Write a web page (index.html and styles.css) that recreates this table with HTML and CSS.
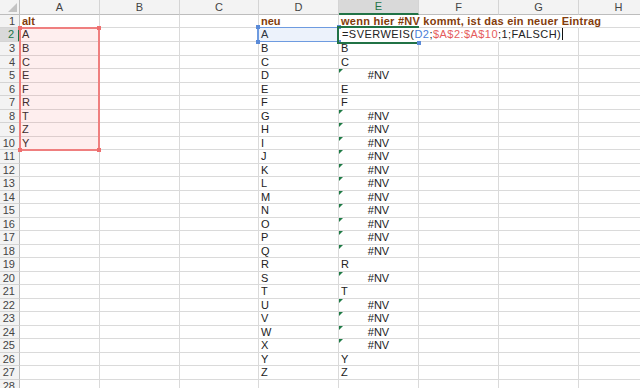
FILE: index.html
```html
<!DOCTYPE html>
<html lang="de">
<head>
<meta charset="utf-8">
<title>Tabelle</title>
<link rel="stylesheet" href="styles.css">
</head>
<body>
<div class="sheet">
  <div class="row colhead">
    <div class="corner"><span class="tri"></span></div>
    <div class="ch">A</div><div class="ch">B</div><div class="ch w79">C</div><div class="ch">D</div><div class="ch chsel">E</div><div class="ch">F</div><div class="ch">G</div><div class="ch">H</div>
  </div>
  <div class="row r13"><div class="rh">1</div><div class="cell hd">alt</div><div class="cell"></div><div class="cell w79"></div><div class="cell hd">neu</div><div class="cell hd wide nr">wenn hier #NV kommt, ist das ein neuer Eintrag</div><div class="cell nr"></div><div class="cell nr"></div><div class="cell"></div></div>
  <div class="row r14"><div class="rh rhsel">2</div><div class="cell">A</div><div class="cell"></div><div class="cell w79"></div><div class="cell">A</div><div class="cell nr nb formula">=SVERWEIS(<span class="refb">D2</span>;<span class="refr">$A$2:$A$10</span>;1;FALSCH)<span class="caret"></span></div><div class="cell nr"></div><div class="cell"></div><div class="cell"></div></div>
  <div class="row r14"><div class="rh">3</div><div class="cell">B</div><div class="cell"></div><div class="cell w79"></div><div class="cell">B</div><div class="cell">B</div><div class="cell"></div><div class="cell"></div><div class="cell"></div></div>
  <div class="row r13"><div class="rh">4</div><div class="cell">C</div><div class="cell"></div><div class="cell w79"></div><div class="cell">C</div><div class="cell">C</div><div class="cell"></div><div class="cell"></div><div class="cell"></div></div>
  <div class="row r14"><div class="rh">5</div><div class="cell">E</div><div class="cell"></div><div class="cell w79"></div><div class="cell">D</div><div class="cell err">#NV</div><div class="cell"></div><div class="cell"></div><div class="cell"></div></div>
  <div class="row r13"><div class="rh">6</div><div class="cell">F</div><div class="cell"></div><div class="cell w79"></div><div class="cell">E</div><div class="cell">E</div><div class="cell"></div><div class="cell"></div><div class="cell"></div></div>
  <div class="row r14"><div class="rh">7</div><div class="cell">R</div><div class="cell"></div><div class="cell w79"></div><div class="cell">F</div><div class="cell">F</div><div class="cell"></div><div class="cell"></div><div class="cell"></div></div>
  <div class="row r13"><div class="rh">8</div><div class="cell">T</div><div class="cell"></div><div class="cell w79"></div><div class="cell">G</div><div class="cell err">#NV</div><div class="cell"></div><div class="cell"></div><div class="cell"></div></div>
  <div class="row r14"><div class="rh">9</div><div class="cell">Z</div><div class="cell"></div><div class="cell w79"></div><div class="cell">H</div><div class="cell err">#NV</div><div class="cell"></div><div class="cell"></div><div class="cell"></div></div>
  <div class="row r13"><div class="rh">10</div><div class="cell">Y</div><div class="cell"></div><div class="cell w79"></div><div class="cell">I</div><div class="cell err">#NV</div><div class="cell"></div><div class="cell"></div><div class="cell"></div></div>
  <div class="row r14"><div class="rh">11</div><div class="cell"></div><div class="cell"></div><div class="cell w79"></div><div class="cell">J</div><div class="cell err">#NV</div><div class="cell"></div><div class="cell"></div><div class="cell"></div></div>
  <div class="row r13"><div class="rh">12</div><div class="cell"></div><div class="cell"></div><div class="cell w79"></div><div class="cell">K</div><div class="cell err">#NV</div><div class="cell"></div><div class="cell"></div><div class="cell"></div></div>
  <div class="row r14"><div class="rh">13</div><div class="cell"></div><div class="cell"></div><div class="cell w79"></div><div class="cell">L</div><div class="cell err">#NV</div><div class="cell"></div><div class="cell"></div><div class="cell"></div></div>
  <div class="row r13"><div class="rh">14</div><div class="cell"></div><div class="cell"></div><div class="cell w79"></div><div class="cell">M</div><div class="cell err">#NV</div><div class="cell"></div><div class="cell"></div><div class="cell"></div></div>
  <div class="row r14"><div class="rh">15</div><div class="cell"></div><div class="cell"></div><div class="cell w79"></div><div class="cell">N</div><div class="cell err">#NV</div><div class="cell"></div><div class="cell"></div><div class="cell"></div></div>
  <div class="row r13"><div class="rh">16</div><div class="cell"></div><div class="cell"></div><div class="cell w79"></div><div class="cell">O</div><div class="cell err">#NV</div><div class="cell"></div><div class="cell"></div><div class="cell"></div></div>
  <div class="row r14"><div class="rh">17</div><div class="cell"></div><div class="cell"></div><div class="cell w79"></div><div class="cell">P</div><div class="cell err">#NV</div><div class="cell"></div><div class="cell"></div><div class="cell"></div></div>
  <div class="row r13"><div class="rh">18</div><div class="cell"></div><div class="cell"></div><div class="cell w79"></div><div class="cell">Q</div><div class="cell err">#NV</div><div class="cell"></div><div class="cell"></div><div class="cell"></div></div>
  <div class="row r14"><div class="rh">19</div><div class="cell"></div><div class="cell"></div><div class="cell w79"></div><div class="cell">R</div><div class="cell">R</div><div class="cell"></div><div class="cell"></div><div class="cell"></div></div>
  <div class="row r13"><div class="rh">20</div><div class="cell"></div><div class="cell"></div><div class="cell w79"></div><div class="cell">S</div><div class="cell err">#NV</div><div class="cell"></div><div class="cell"></div><div class="cell"></div></div>
  <div class="row r14"><div class="rh">21</div><div class="cell"></div><div class="cell"></div><div class="cell w79"></div><div class="cell">T</div><div class="cell">T</div><div class="cell"></div><div class="cell"></div><div class="cell"></div></div>
  <div class="row r13"><div class="rh">22</div><div class="cell"></div><div class="cell"></div><div class="cell w79"></div><div class="cell">U</div><div class="cell err">#NV</div><div class="cell"></div><div class="cell"></div><div class="cell"></div></div>
  <div class="row r14"><div class="rh">23</div><div class="cell"></div><div class="cell"></div><div class="cell w79"></div><div class="cell">V</div><div class="cell err">#NV</div><div class="cell"></div><div class="cell"></div><div class="cell"></div></div>
  <div class="row r13"><div class="rh">24</div><div class="cell"></div><div class="cell"></div><div class="cell w79"></div><div class="cell">W</div><div class="cell err">#NV</div><div class="cell"></div><div class="cell"></div><div class="cell"></div></div>
  <div class="row r14"><div class="rh">25</div><div class="cell"></div><div class="cell"></div><div class="cell w79"></div><div class="cell">X</div><div class="cell err">#NV</div><div class="cell"></div><div class="cell"></div><div class="cell"></div></div>
  <div class="row r13"><div class="rh">26</div><div class="cell"></div><div class="cell"></div><div class="cell w79"></div><div class="cell">Y</div><div class="cell">Y</div><div class="cell"></div><div class="cell"></div><div class="cell"></div></div>
  <div class="row r14"><div class="rh">27</div><div class="cell"></div><div class="cell"></div><div class="cell w79"></div><div class="cell">Z</div><div class="cell">Z</div><div class="cell"></div><div class="cell"></div><div class="cell"></div></div>
  <div class="row r14"><div class="rh">28</div><div class="cell"></div><div class="cell"></div><div class="cell w79"></div><div class="cell"></div><div class="cell"></div><div class="cell"></div><div class="cell"></div><div class="cell"></div></div>

  <div class="range-red"><i class="hdl tl"></i><i class="hdl tr"></i><i class="hdl bl"></i><i class="hdl br"></i></div>
  <div class="range-blue"><i class="hdl tl"></i><i class="hdl tr"></i><i class="hdl bl"></i><i class="hdl br"></i></div>
  <div class="active-cell"><i class="fill"></i></div>
</div>
</body>
</html>
```
FILE: styles.css
```css
* { box-sizing: border-box; }
html, body { margin: 0; padding: 0; background: #fff; }
body { font-family: "Liberation Sans", Arial, sans-serif; font-size: 11px; color: #222; }

.sheet { position: relative; width: 640px; height: 388px; overflow: hidden; }

.row { display: flex; height: 14px; }
.r13 { height: 13px; }

.colhead { height: 15px; }
.corner { flex: none; width: 20px; background: #f3f3f3; border-right: 1px solid #bdbdbd; border-bottom: 1px solid #bdbdbd; display: flex; justify-content: flex-end; align-items: flex-end; padding: 0 2px 2px 0; }
.tri { width: 0; height: 0; border-left: 9px solid transparent; border-bottom: 9px solid #c3c3c3; }
.ch { flex: none; width: 80px; background: #f3f3f3; border-right: 1px solid #d4d4d4; border-bottom: 1px solid #bdbdbd; text-align: center; line-height: 14px; color: #444; }
.chsel { background: #d9d9d9; color: #217346; border-bottom: 2px solid #217346; line-height: 13px; }

.rh { flex: none; width: 20px; background: #f3f3f3; border-right: 1px solid #bdbdbd; border-bottom: 1px solid #d4d4d4; text-align: right; padding-right: 4px; color: #444; line-height: 13px; white-space: nowrap; }
.r13 .rh { line-height: 12px; }
.rhsel { background: #d9d9d9; color: #217346; border-right: 2px solid #217346; }

.cell { flex: none; width: 80px; position: relative; border-right: 1px solid #dadada; border-bottom: 1px solid #dadada; padding: 0 2px; line-height: 13px; white-space: nowrap; }
.r13 .cell { line-height: 12px; }
.w79 { width: 79px; }
.nr { border-right-color: transparent; }
.nb { border-bottom-color: transparent; }

.hd { font-weight: bold; color: #833c0b; }
.wide { letter-spacing: 0.25px; }
.err { text-align: center; }
.err::before { content: ""; position: absolute; left: 0; top: 0; width: 0; height: 0; border-top: 4px solid #1e7b45; border-right: 4px solid transparent; }

.formula { padding-left: 3px; letter-spacing: 0.45px; }
.refb { color: #4a80d8; }
.refr { color: #e55c5c; }
.caret { display: inline-block; width: 1px; height: 12px; background: #111; vertical-align: -2px; margin-left: 1px; }

.range-red { position: absolute; left: 19px; top: 27px; width: 81px; height: 124px; border: 2px solid #ef7f7f; background: rgba(245, 120, 120, 0.13); }
.range-blue { position: absolute; left: 257px; top: 27px; width: 82px; height: 15px; border: 1px solid #6e9be0; border-left-width: 2px; background: rgba(120, 160, 230, 0.14); }
.hdl { position: absolute; width: 4px; height: 4px; }
.range-red .hdl { background: #ee6f6f; }
.range-blue .hdl { background: #5a8ad8; }
.tl { left: -3px; top: -3px; }
.tr { right: -3px; top: -3px; }
.bl { left: -3px; bottom: -3px; }
.br { right: -3px; bottom: -3px; }

.active-cell { position: absolute; left: 337px; top: 26px; width: 82px; height: 18px; border: 2px solid #217346; border-right: none; }
.fill { position: absolute; right: -2px; bottom: -3px; width: 4px; height: 4px; background: #5a8ad8; }
```
